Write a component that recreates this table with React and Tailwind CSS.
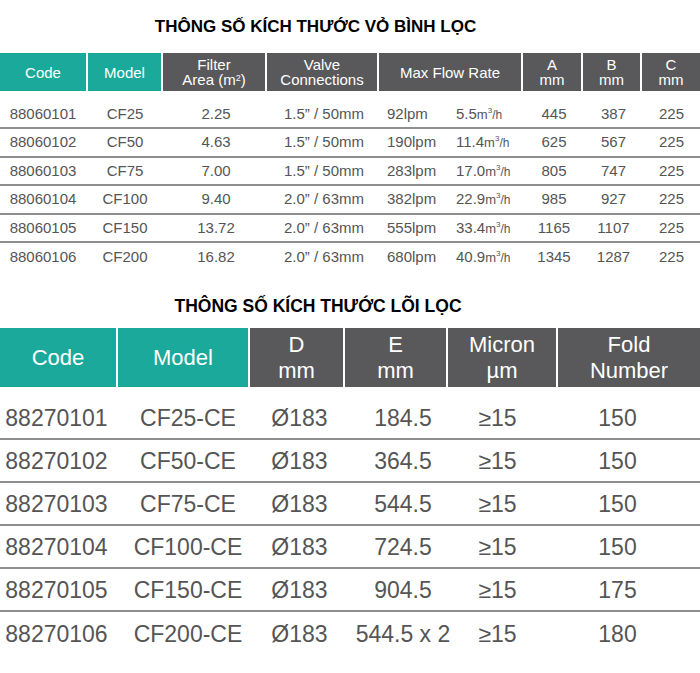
import React from 'react';

const housing = [
  ['88060101', 'CF25', '2.25', '1.5” / 50mm', '92lpm', '5.5', '445', '387', '225'],
  ['88060102', 'CF50', '4.63', '1.5” / 50mm', '190lpm', '11.4', '625', '567', '225'],
  ['88060103', 'CF75', '7.00', '1.5” / 50mm', '283lpm', '17.0', '805', '747', '225'],
  ['88060104', 'CF100', '9.40', '2.0” / 63mm', '382lpm', '22.9', '985', '927', '225'],
  ['88060105', 'CF150', '13.72', '2.0” / 63mm', '555lpm', '33.4', '1165', '1107', '225'],
  ['88060106', 'CF200', '16.82', '2.0” / 63mm', '680lpm', '40.9', '1345', '1287', '225'],
];

const cartridges = [
  ['88270101', 'CF25-CE', 'Ø183', '184.5', '≥15', '150'],
  ['88270102', 'CF50-CE', 'Ø183', '364.5', '≥15', '150'],
  ['88270103', 'CF75-CE', 'Ø183', '544.5', '≥15', '150'],
  ['88270104', 'CF100-CE', 'Ø183', '724.5', '≥15', '150'],
  ['88270105', 'CF150-CE', 'Ø183', '904.5', '≥15', '175'],
  ['88270106', 'CF200-CE', 'Ø183', '544.5 x 2', '≥15', '180'],
];

const teal = 'bg-[#1ba99b]';
const gray = 'bg-[#59595b]';

const HousingTable = () => (
  <div>
    <div className="grid grid-cols-[88px_75px_104px_112px_144px_60px_59px_58px] h-[38px] text-white text-[15px] leading-[15px]">
      <div className={`${teal} border-r-2 border-white flex items-center justify-center`}>Code</div>
      <div className={`${teal} border-r-2 border-white flex items-center justify-center`}>Model</div>
      <div className={`${gray} border-r-2 border-white flex flex-col items-center justify-center`}>
        <span>Filter</span>
        <span>
          Area (m<sup className="text-[9px]">2</sup>)
        </span>
      </div>
      <div className={`${gray} border-r-2 border-white flex flex-col items-center justify-center`}>
        <span>Valve</span>
        <span>Connections</span>
      </div>
      <div className={`${gray} border-r-2 border-white flex items-center justify-center`}>Max Flow Rate</div>
      <div className={`${gray} border-r-2 border-white flex flex-col items-center justify-center`}>
        <span>A</span>
        <span>mm</span>
      </div>
      <div className={`${gray} border-r-2 border-white flex flex-col items-center justify-center`}>
        <span>B</span>
        <span>mm</span>
      </div>
      <div className={`${gray} flex flex-col items-center justify-center`}>
        <span>C</span>
        <span>mm</span>
      </div>
    </div>

    <div className="mt-[10px]">
      {housing.map((r, i) => (
        <div
          key={r[0]}
          className={`grid grid-cols-[86px_78px_104px_112px_74px_70px_60px_59px_57px] h-[28.4px] items-center text-[15px] text-[#555] ${
            i < housing.length - 1 ? 'border-b-2 border-[#8e8e8e]' : ''
          }`}
        >
          <div className="text-center">{r[0]}</div>
          <div className="text-center">{r[1]}</div>
          <div className="text-center">{r[2]}</div>
          <div className="text-center">{r[3]}</div>
          <div className="pl-[7px]">{r[4]}</div>
          <div className="pl-[2px]">
            {r[5]}
            <span className="text-[13px]">m</span>
            <sup className="text-[8px] -top-[6px]">3</sup>
            <span className="text-[12px]">/h</span>
          </div>
          <div className="text-center">{r[6]}</div>
          <div className="text-center">{r[7]}</div>
          <div className="text-center">{r[8]}</div>
        </div>
      ))}
    </div>
  </div>
);

const CartridgeTable = () => (
  <div>
    <div className="grid grid-cols-[118px_132px_95px_103px_110px_142px] h-[59px] text-white text-[22px] leading-[26px]">
      <div className={`${teal} border-r-2 border-white flex items-center justify-center`}>Code</div>
      <div className={`${teal} border-r-2 border-white flex items-center justify-center`}>Model</div>
      <div className={`${gray} border-r-2 border-white flex flex-col items-center justify-center`}>
        <span>D</span>
        <span>mm</span>
      </div>
      <div className={`${gray} border-r-2 border-white flex flex-col items-center justify-center`}>
        <span>E</span>
        <span>mm</span>
      </div>
      <div className={`${gray} border-r-2 border-white flex flex-col items-center justify-center`}>
        <span>Micron</span>
        <span>µm</span>
      </div>
      <div className={`${gray} flex flex-col items-center justify-center`}>
        <span>Fold</span>
        <span>Number</span>
      </div>
    </div>

    <div className="mt-[10px]">
      {cartridges.map((r, i) => (
        <div
          key={r[0]}
          className={`grid grid-cols-[113px_150px_73px_134px_55px_1fr] h-[43px] items-center text-[23px] text-[#555] ${
            i < cartridges.length - 1 ? 'border-b-2 border-[#8e8e8e]' : ''
          }`}
        >
          <div className="text-center">{r[0]}</div>
          <div className="text-center">{r[1]}</div>
          <div className="text-center">{r[2]}</div>
          <div className="text-center">{r[3]}</div>
          <div className="text-center">{r[4]}</div>
          <div className="text-center pl-[10px]">{r[5]}</div>
        </div>
      ))}
    </div>
  </div>
);

export default function App() {
  return (
    <div className="w-[700px] h-[673px] bg-white font-['Liberation_Sans',Arial,sans-serif] overflow-hidden">
      <h2 className="h-[53px] pt-[18px] pr-[69px] text-center text-[17px] leading-[18px] font-bold text-black">
        THÔNG SỐ KÍCH THƯỚC VỎ BÌNH LỌC
      </h2>
      <HousingTable />
      <h2 className="h-[57px] pt-[26px] pr-[64px] text-center text-[17.5px] leading-[18px] font-bold text-black">
        THÔNG SỐ KÍCH THƯỚC LÕI LỌC
      </h2>
      <CartridgeTable />
    </div>
  );
}
